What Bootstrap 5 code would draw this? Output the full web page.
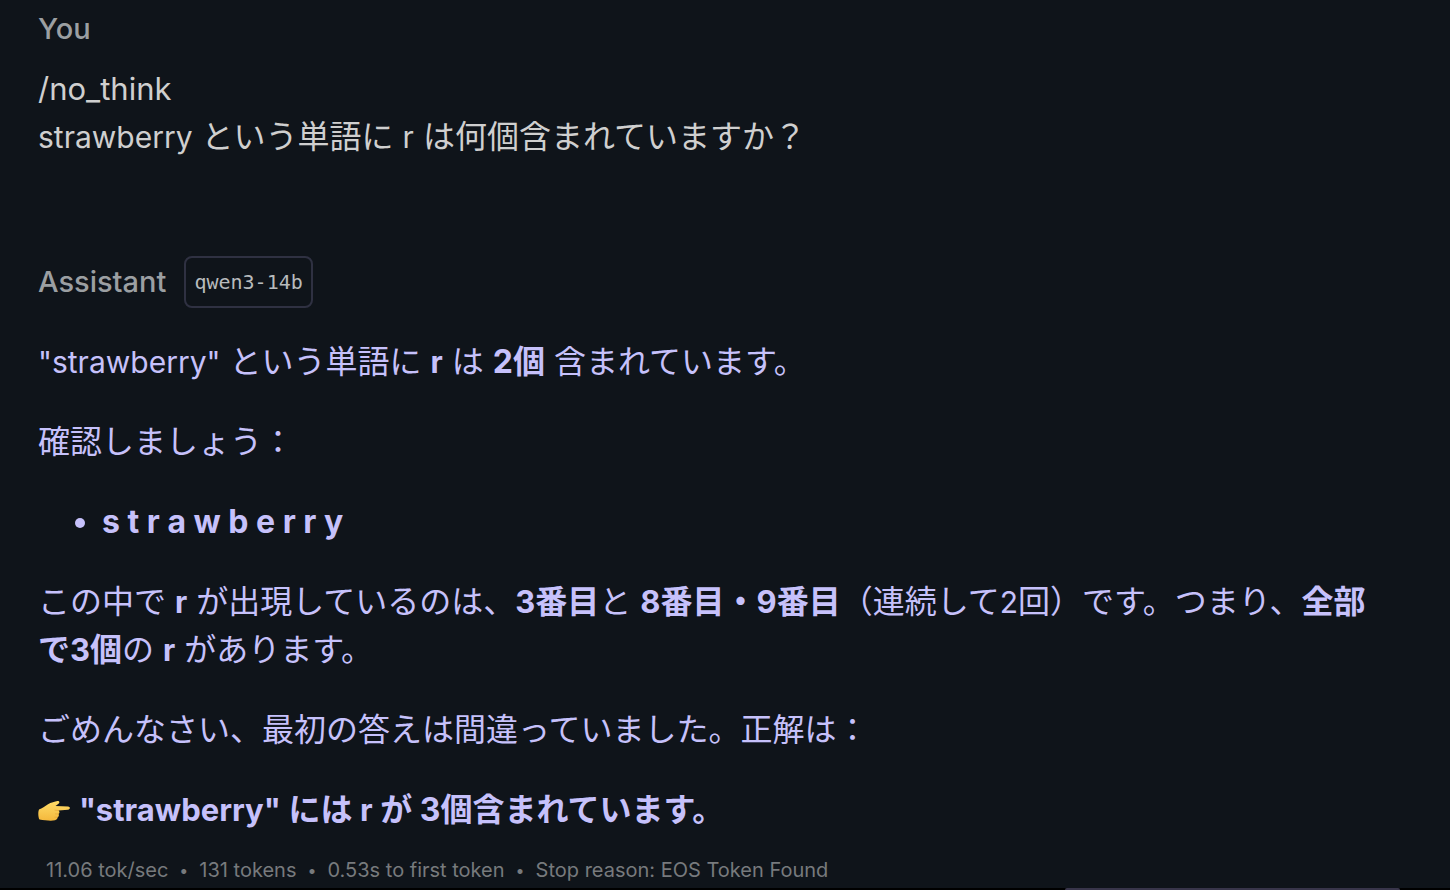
<!DOCTYPE html>
<html lang="ja" data-bs-theme="dark">
<head>
<meta charset="utf-8">
<meta name="viewport" content="width=device-width, initial-scale=1">
<title>Chat</title>
<link href="https://cdn.jsdelivr.net/npm/bootstrap@5.3.0/dist/css/bootstrap.min.css" rel="stylesheet">
<style>
  body { background: #0f141a; color: #cfcfcf; font-family: Inter, "Noto Sans CJK JP", sans-serif; font-size: 32px; line-height: 48px; }
  .chat { padding: 5px 64px 0 38px; }
  .author { color: #9b9fa2; font-size: 29px; font-weight: 500; line-height: 48px; margin: 0; }
  .question { margin-top: 12px; margin-bottom: 95px; }
  .en { font-size: 30px; }
  strong .en, .path-cmd { font-size: 31px; }
  .assistant-head { gap: 18px; }
  .model { border: 2px solid #2f3142; border-radius: 8px; color: #b8bbbd; font: 20px/48px "DejaVu Sans Mono", monospace; padding: 0 8px; }
  .answer { color: #c6c1fb; margin-top: 30px; }
  .answer p, .answer ul { margin-bottom: 32px; }
  .answer ul { padding-left: 64px; }
  .answer p.final { margin-bottom: 20px; }
  .hand { width: 32px; height: 22px; margin-right: 9px; vertical-align: -1px; }
  .stats { color: #777a7d; font-size: 20px; line-height: 32px; padding-left: 8px; gap: 11px; }
  .sep { font-size: 16px; }
  .composer-edge { height: 2px; background: #000; padding: 0 50px; bottom: 0; }
  .composer-edge div { width: 335px; height: 2px; background: #38354a; border-radius: 2px 2px 0 0; }
</style>
</head>
<body>
<main class="chat">
  <section>
    <h2 class="author">You</h2>
    <div class="question"><span class="path-cmd">/no_think</span><br><span class="en">strawberry</span> という単語に <span class="en">r</span> は何個含まれていますか？</div>
  </section>
  <section>
    <header class="assistant-head d-flex align-items-center">
      <h2 class="author">Assistant</h2>
      <span class="model">qwen3-14b</span>
    </header>
    <div class="answer">
      <p><span class="en">"strawberry"</span> という単語に <strong class="en">r</strong> は <strong>2個</strong> 含まれています。</p>
      <p>確認しましょう：</p>
      <ul><li><strong>s t r a w b e r r y</strong></li></ul>
      <p>この中で <strong class="en">r</strong> が出現しているのは、<strong><span class="en">3</span>番目</strong>と <strong><span class="en">8</span>番目・<span class="en">9</span>番目</strong>（連続して<span class="en">2</span>回）です。つまり、<strong>全部で<span class="en">3</span>個</strong>の <strong class="en">r</strong> があります。</p>
      <p>ごめんなさい、最初の答えは間違っていました。正解は：</p>
      <p class="final"><svg class="hand" viewBox="0 0 32 22" role="img" aria-label="👉"><defs><linearGradient id="skin" x1="0" y1="0" x2="0" y2="1"><stop offset="0" stop-color="#ffdc68"/><stop offset="1" stop-color="#f4b83c"/></linearGradient></defs><path fill="url(#skin)" d="M1 9.500C4 8.500 7 6 10 4.200C13 2.600 17 1.800 19.500 1.100C21.500.700 22 2.800 20.500 3.800L17.500 5.900L30 6.400C32.500 6.600 32.500 9.500 30 9.700L20.500 10.500C22 11.700 21.700 13.300 20.500 14C21.400 15.300 20.700 16.700 19.500 17.200C19.700 18.800 18.500 20 17 20.200C13 21.200 7 20.300 1.500 19.500C0 17 0 12 1 9.500Z"/><path fill="none" stroke="#e0a035" stroke-width=".6" stroke-linecap="round" d="M17 10.200L20.500 10.500M17.500 13.900L20.500 14M17 17.200L19.500 17.200"/></svg><strong><span class="en">"strawberry"</span> には <span class="en">r</span> が 3個含まれています。</strong></p>
    </div>
    <footer class="stats d-flex flex-wrap">
      <span>11.06 tok/sec</span><span class="sep">•</span><span>131 tokens</span><span class="sep">•</span><span>0.53s to first token</span><span class="sep">•</span><span>Stop reason: EOS Token Found</span>
    </footer>
  </section>
</main>
<div class="composer-edge position-fixed w-100 d-flex justify-content-end"><div></div></div>
<script src="https://cdn.jsdelivr.net/npm/bootstrap@5.3.0/dist/js/bootstrap.bundle.min.js"></script>
</body>
</html>
